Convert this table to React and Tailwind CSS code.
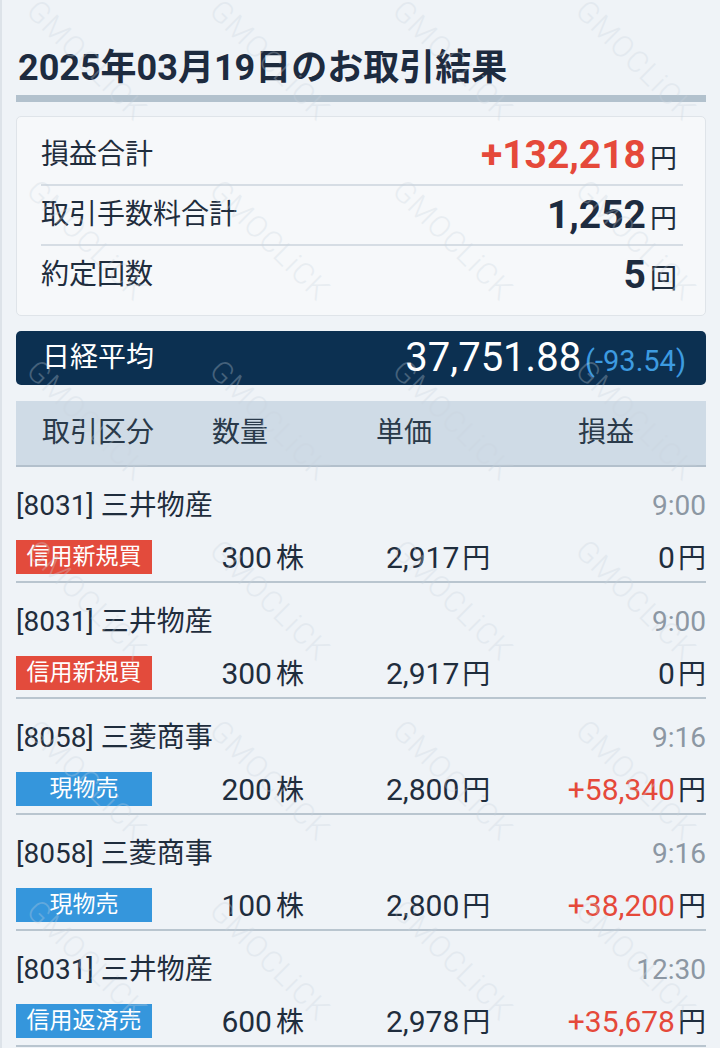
import React from "react";

const FONT = { fontFamily: "Roboto, 'Noto Sans CJK JP', sans-serif" };

const SUMMARY = [
  { label: "損益合計", value: "+132,218", unit: "円", red: true },
  { label: "取引手数料合計", value: "1,252", unit: "円" },
  { label: "約定回数", value: "5", unit: "回" },
];

const TRADES = [
  { name: "[8031] 三井物産", time: "9:00", kind: "信用新規買", color: "red", qty: "300", price: "2,917", pl: "0" },
  { name: "[8031] 三井物産", time: "9:00", kind: "信用新規買", color: "red", qty: "300", price: "2,917", pl: "0" },
  { name: "[8058] 三菱商事", time: "9:16", kind: "現物売", color: "blue", qty: "200", price: "2,800", pl: "+58,340" },
  { name: "[8058] 三菱商事", time: "9:16", kind: "現物売", color: "blue", qty: "100", price: "2,800", pl: "+38,200" },
  { name: "[8031] 三井物産", time: "12:30", kind: "信用返済売", color: "blue", qty: "600", price: "2,978", pl: "+35,678" },
];

// watermark centres, a loose 183 x 180 grid
const MARKS = [];
[-120, 60, 240, 420, 600, 780, 960].forEach((y) => {
  [85, 268, 451, 634].forEach((x) => MARKS.push({ x, y }));
});

function Watermarks() {
  return (
    <div className="pointer-events-none absolute inset-0 overflow-hidden" aria-hidden="true">
      {MARKS.map((m, i) => (
        <div
          key={i}
          className="absolute -translate-x-1/2 -translate-y-1/2 rotate-45 whitespace-nowrap text-[30px] font-light tracking-[1px] text-[#c9d4de] opacity-30"
          style={{ left: m.x, top: m.y }}
        >
          GMOCLiCK
        </div>
      ))}
    </div>
  );
}

function Trade({ t }) {
  const badge = t.color === "red" ? "bg-[#e34b3c]" : "bg-[#3596dc]";
  return (
    <div className="border-b-2 border-[#b9c5cf] pt-[21px] pb-[7px]">
      <div className="flex h-[36px] items-center justify-between">
        <span className="text-[28px] text-[#1f2d3d]">{t.name}</span>
        <span className="text-[28px] text-[#8c97a3]">{t.time}</span>
      </div>
      <div className="mt-[16px] flex h-[34px] items-center text-[#1f2d3d]">
        <div className={`flex h-[34px] w-[136px] items-center justify-center text-[23px] text-white ${badge}`}>
          {t.kind}
        </div>
        <div className="flex w-[152px] items-baseline justify-end">
          <span className="text-[30px]">{t.qty}</span>
          <span className="ml-[4px] text-[28px]">株</span>
        </div>
        <div className="flex items-baseline pl-[82px]">
          <span className="text-[30px]">{t.price}</span>
          <span className="ml-[3px] text-[28px]">円</span>
        </div>
        <div className="flex flex-1 items-baseline justify-end">
          <span className={`text-[30px] ${t.pl.startsWith("+") ? "text-[#e5493a]" : ""}`}>{t.pl}</span>
          <span className="ml-[3px] text-[28px]">円</span>
        </div>
      </div>
    </div>
  );
}

export default function App() {
  return (
    <div
      className="relative min-h-[1048px] w-[720px] overflow-hidden border-l-2 border-[#dde3e9] bg-[#eff3f7]"
      style={FONT}
    >
      <div className="px-[14px] pt-[48px]">
        <h1 className="h-[40px] pl-[2px] text-[36px] font-bold leading-[40px] text-[#1d2b3f]">
          2025年03月19日のお取引結果
        </h1>
        <div className="mt-[7px] h-[7px] bg-[#b2c1cd]" />

        <div className="mt-[14px] rounded-[5px] border border-[#dfe4e9] bg-[#f6f8fa] pl-[24px] pr-[22px] pt-[9px] pb-[11px]">
          {SUMMARY.map((s, i) => (
            <div key={s.label} className={i > 0 ? "border-t-2 border-[#d6dde4]" : ""}>
              <div className="flex h-[58px] items-center justify-between pr-[6px]">
                <span className="text-[28px] text-[#1f2d3d]">{s.label}</span>
                <span className="flex items-baseline">
                  <span className={`text-[39px] font-bold ${s.red ? "text-[#e5493a]" : "text-[#1d2b3f]"}`}>
                    {s.value}
                  </span>
                  <span className="ml-[4px] text-[27px] text-[#1f2d3d]">{s.unit}</span>
                </span>
              </div>
            </div>
          ))}
        </div>

        <div className="mt-[15px] flex h-[54px] items-center justify-between rounded-[5px] bg-[#0c3051] pl-[26px] pr-[20px]">
          <span className="text-[28px] text-white">日経平均</span>
          <span className="flex items-baseline">
            <span className="text-[40px] text-white">37,751.88</span>
            <span className="ml-[4px] text-[29px] text-[#3d9be0]">(-93.54)</span>
          </span>
        </div>

        <div className="mt-[16px] flex h-[66px] items-center border-b-2 border-[#b3c0cc] bg-[#cfdbe6] pl-[26px] text-[28px] text-[#2a3a4a]">
          <span className="w-[170px]">取引区分</span>
          <span className="w-[164px]">数量</span>
          <span className="w-[202px]">単価</span>
          <span>損益</span>
        </div>

        {TRADES.map((t, i) => (
          <Trade key={i} t={t} />
        ))}
      </div>
      <Watermarks />
    </div>
  );
}
